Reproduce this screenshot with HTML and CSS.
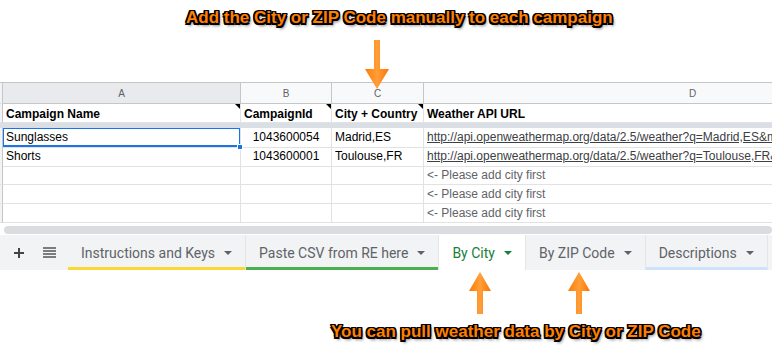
FILE: index.html
```html
<!DOCTYPE html>
<html lang="en">
<head>
    <meta charset="UTF-8">
    <meta name="viewport" content="width=device-width, initial-scale=1.0">
    <title>Weather campaigns - By City</title>
    <link rel="stylesheet" href="styles.css">
</head>
<body>
    <div class="note note-top">Add the City or ZIP Code manually to each campaign</div>

    <div class="sheet">
        <div class="row col-heads">
            <div class="rowhead"></div>
            <div class="cell active-col">A</div>
            <div class="cell">B</div>
            <div class="cell">C</div>
            <div class="cell">D</div>
        </div>
        <div class="row labels">
            <div class="rowhead"></div>
            <div class="cell has-note">Campaign Name</div>
            <div class="cell has-note">CampaignId</div>
            <div class="cell has-note">City + Country</div>
            <div class="cell">Weather API URL</div>
        </div>
        <div class="freeze"></div>
        <div class="row">
            <div class="rowhead"></div>
            <div class="cell selected">Sunglasses</div>
            <div class="cell num">1043600054</div>
            <div class="cell">Madrid,ES</div>
            <div class="cell link">http://api.openweathermap.org/data/2.5/weather?q=Madrid,ES&amp;mo</div>
        </div>
        <div class="row">
            <div class="rowhead"></div>
            <div class="cell">Shorts</div>
            <div class="cell num">1043600001</div>
            <div class="cell">Toulouse,FR</div>
            <div class="cell link">http://api.openweathermap.org/data/2.5/weather?q=Toulouse,FR&amp;</div>
        </div>
        <div class="row">
            <div class="rowhead"></div>
            <div class="cell"></div>
            <div class="cell"></div>
            <div class="cell"></div>
            <div class="cell hint">&lt;- Please add city first</div>
        </div>
        <div class="row">
            <div class="rowhead"></div>
            <div class="cell"></div>
            <div class="cell"></div>
            <div class="cell"></div>
            <div class="cell hint">&lt;- Please add city first</div>
        </div>
        <div class="row">
            <div class="rowhead"></div>
            <div class="cell"></div>
            <div class="cell"></div>
            <div class="cell"></div>
            <div class="cell hint">&lt;- Please add city first</div>
        </div>
        <div class="scrollbar"><div class="thumb"></div></div>
    </div>

    <div class="tabbar">
        <div class="tool">
            <svg width="12" height="12" viewBox="0 0 12 12"><path d="M6 1v10M1 6h10" stroke="#444" stroke-width="2"/></svg>
        </div>
        <div class="tool">
            <svg width="13" height="11" viewBox="0 0 13 11"><path d="M0 1h13M0 4h13M0 7h13M0 10h13" stroke="#555" stroke-width="1.6"/></svg>
        </div>
        <div class="tab tab-yellow">Instructions and Keys</div>
        <div class="tab tab-green">Paste CSV from RE here</div>
        <div class="tab active">By City</div>
        <div class="tab">By ZIP Code</div>
        <div class="tab tab-blue">Descriptions</div>
    </div>

    <div class="note note-bottom">You can pull weather data by City or ZIP Code</div>

    <svg class="arrows" width="772" height="350" viewBox="0 0 772 350">
        <defs>
            <linearGradient id="orange" x1="0" y1="0" x2="1" y2="0">
                <stop offset="0" stop-color="#ff7a00"/>
                <stop offset="0.5" stop-color="#ff9f3a"/>
                <stop offset="1" stop-color="#ff7300"/>
            </linearGradient>
        </defs>
        <path d="M374 40h6v29h9l-12 20l-12-20h9z" fill="url(#orange)"/>
        <path d="M480 272l11 19h-8v23h-6v-23h-8z" fill="url(#orange)"/>
        <path d="M579 272l11 19h-8v23h-6v-23h-8z" fill="url(#orange)"/>
    </svg>
</body>
</html>
```

FILE: styles.css
```css
body {
    margin: 0;
    width: 772px;
    height: 350px;
    overflow: hidden;
    background-color: white;
    font-family: "Liberation Sans", Arial, sans-serif;
    position: relative;
}
.note {
    font-size: 17px;
    line-height: 20px;
    font-weight: bold;
    color: #ff7f00;
    white-space: nowrap;
    text-shadow: -1.5px -1.5px 0 #000, 1.5px -1.5px 0 #000, -1.5px 1.5px 0 #000, 1.5px 1.5px 0 #000,
                 0 -1.5px 0 #000, 0 1.5px 0 #000, -1.5px 0 0 #000, 1.5px 0 0 #000,
                 2px 3px 3px rgba(0, 0, 0, 0.55);
}
.note-top {
    height: 82px;
    box-sizing: border-box;
    padding: 8px 0 0 186px;
}
.note-bottom {
    padding: 52px 0 0 331px;
}
.sheet {
    border-top: 1px solid #c4c7c5;
    font-size: 12px;
    color: #000;
}
.row {
    display: grid;
    grid-template-columns: 3px 238px 91px 92px 538px;
    height: 19px;
}
.rowhead {
    background-color: #f1f3f4;
    border-right: 1px solid #c4c7c5;
    border-bottom: 1px solid #e2e2e2;
    box-sizing: border-box;
}
.cell {
    box-sizing: border-box;
    border-right: 1px solid #e2e2e2;
    border-bottom: 1px solid #e2e2e2;
    padding: 0 3px;
    line-height: 19px;
    white-space: nowrap;
    overflow: hidden;
    position: relative;
}
.col-heads {
    height: 21px;
}
.col-heads .cell {
    background-color: #f8f9fa;
    border-color: #c4c7c5;
    text-align: center;
    font-size: 10px;
    line-height: 22px;
    color: #5f6368;
}
.col-heads .active-col {
    background-color: #e8eaed;
}
.labels .cell {
    font-weight: bold;
    line-height: 20px;
}
.has-note::after {
    content: "";
    position: absolute;
    top: 0;
    right: 0;
    border-top: 5px solid #000;
    border-left: 5px solid transparent;
}
.freeze {
    height: 5px;
    background-color: #dadfe5;
}
.selected {
    overflow: visible;
    box-shadow: inset 0 0 0 1px #1a73e8, inset 0 -1px 0 1px #1a73e8;
}
.selected::after {
    content: "";
    position: absolute;
    right: -3px;
    bottom: -3px;
    width: 6px;
    height: 6px;
    background-color: #1a73e8;
    border: 1px solid white;
    box-sizing: border-box;
    z-index: 2;
}
.num {
    text-align: center;
}
.link {
    color: #3c4043;
    text-decoration: underline;
    overflow: visible;
}
.hint {
    color: #5f6368;
}
.scrollbar {
    height: 12px;
    padding: 3px 0 0 4px;
    box-sizing: border-box;
}
.thumb {
    height: 8px;
    border-radius: 4px;
    background-color: #dadce0;
}
.tabbar {
    display: flex;
    height: 35px;
    background-color: #f1f3f4;
    font-family: Roboto, "Liberation Sans", sans-serif;
    font-size: 14px;
    font-weight: 400;
    color: #5f6368;
}
.tool {
    flex-shrink: 0;
    width: 30px;
    display: flex;
    align-items: center;
    justify-content: center;
    padding-left: 4px;
}
.tool + .tool {
    width: 30px;
    padding: 0 4px 0 0;
}
.tab {
    flex-shrink: 0;
    display: flex;
    align-items: center;
    gap: 9px;
    padding: 0 13px 0 13px;
    border-right: 1px solid #e3e5e8;
    box-sizing: border-box;
    white-space: nowrap;
}
.tab::after {
    content: "";
    border-top: 4px solid #5f6368;
    border-left: 4px solid transparent;
    border-right: 4px solid transparent;
}
.tab-yellow {
    box-shadow: inset 0 -3px 0 #fdd835;
}
.tab-green {
    box-shadow: inset 0 -3px 0 #4caf50;
}
.tab-blue {
    box-shadow: inset 0 -3px 0 #cfe2fb;
}
.tab.active {
    background-color: white;
    color: #188038;
}
.tab.active::after {
    border-top-color: #188038;
}
.arrows {
    position: absolute;
    top: 0;
    left: 0;
    pointer-events: none;
}
```
